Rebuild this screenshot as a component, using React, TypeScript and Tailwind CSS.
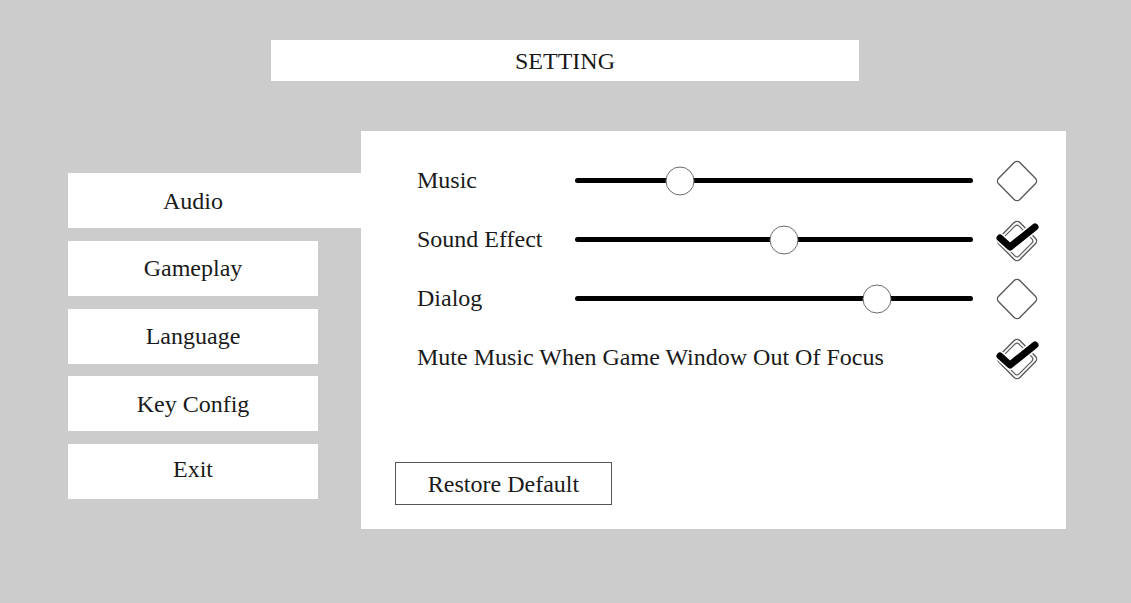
import React from "react";

const serif = { fontFamily: '"Liberation Serif", "DejaVu Serif", serif' };

function Slider({ pct }: { pct: number }) {
  return (
    <div className="relative w-[398px] h-[30px] flex items-center">
      <div className="w-full h-[5px] rounded-full bg-black" />
      <div
        className="absolute top-1/2 w-[29px] h-[29px] -translate-x-1/2 -translate-y-1/2 rounded-full bg-white border-[1.5px] border-[#6b6b6b]"
        style={{ left: `${pct}%` }}
      />
    </div>
  );
}

function Check({ checked }: { checked: boolean }) {
  return (
    <svg width="48" height="48" viewBox="0 0 48 48" className="ml-[20px]">
      {checked ? (
        <>
          <rect x="9" y="10" width="30" height="30" rx="4" transform="rotate(45 24 25)" fill="white" stroke="#5a5a5a" strokeWidth="1.4" />
          <rect x="12" y="13" width="24" height="24" rx="3" transform="rotate(45 24 25)" fill="none" stroke="#5a5a5a" strokeWidth="1.2" />
          <path d="M7 22 L17 31 L42 11" fill="none" stroke="white" strokeWidth="10" strokeLinecap="round" strokeLinejoin="round" />
          <path d="M7 22 L17 31 L42 11" fill="none" stroke="black" strokeWidth="7" strokeLinecap="round" strokeLinejoin="round" />
        </>
      ) : (
        <rect x="9" y="9" width="30" height="30" rx="4" transform="rotate(45 24 24)" fill="white" stroke="#5a5a5a" strokeWidth="1.4" />
      )}
    </svg>
  );
}

function Row({ label, pct, checked }: { label: string; pct?: number; checked: boolean }) {
  return (
    <div className="h-[59px] flex items-center">
      {pct !== undefined ? (
        <>
          <div className="w-[158px] text-[24px] text-[#1a1a1a] pb-[2px]">{label}</div>
          <Slider pct={pct} />
        </>
      ) : (
        <div className="w-[556px] text-[24px] text-[#1a1a1a] whitespace-nowrap pb-[2px]">{label}</div>
      )}
      <Check checked={checked} />
    </div>
  );
}

export default function App() {
  const tabs = [
    { t: "Gameplay", c: "pb-[1px]" },
    { t: "Language", c: "pb-0" },
    { t: "Key Config", c: "pb-0" },
    { t: "Exit", c: "pb-[6px]" },
  ];
  return (
    <div className="w-[1131px] h-[603px] bg-[#cccccc] overflow-hidden" style={serif}>
      <div className="pt-[40px] pl-[271px]">
        <div className="w-[588px] h-[41px] bg-white flex items-center justify-center text-[24px] text-[#1a1a1a]">
          SETTING
        </div>
      </div>
      <div className="flex pl-[68px] pt-[50px]">
        <div className="w-[293px] pt-[42px] flex flex-col gap-[12.75px]">
          <div className="w-[293px] h-[55px] bg-white flex items-center text-[24px] text-[#1a1a1a]">
            <span className="w-[250px] text-center">Audio</span>
          </div>
          {tabs.map(({ t, c }) => (
            <div key={t} className={`w-[250px] h-[55px] bg-white flex items-center justify-center text-[24px] text-[#1a1a1a] ${c}`}>
              {t}
            </div>
          ))}
        </div>
        <div className="w-[705px] h-[398px] bg-white flex flex-col">
          <div className="pt-[20px] pl-[56px]">
            <Row label="Music" pct={26.4} checked={false} />
            <Row label="Sound Effect" pct={52.5} checked={true} />
            <Row label="Dialog" pct={75.9} checked={false} />
            <Row label="Mute Music When Game Window Out Of Focus" checked={true} />
          </div>
          <div className="mt-auto pl-[34px] pb-[24px]">
            <button className="w-[217px] h-[43px] border border-[#555555] bg-white text-[24px] text-[#1a1a1a]">
              Restore Default
            </button>
          </div>
        </div>
      </div>
    </div>
  );
}
